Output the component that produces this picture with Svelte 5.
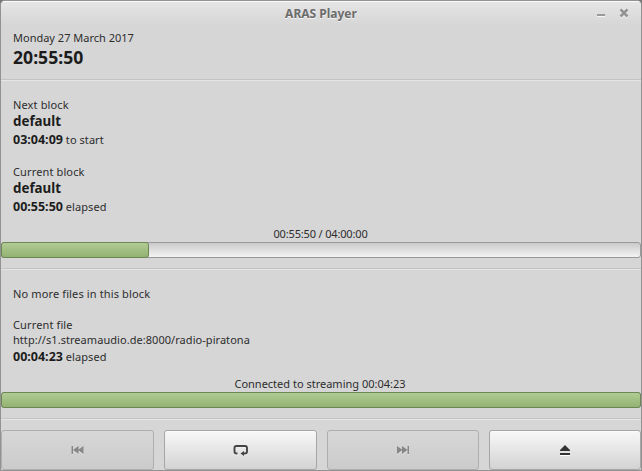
<script>
  let clock = $state('20:55:50');
  const blocks = [
    { label: 'Next block', name: 'default', time: '03:04:09', note: 'to start' },
    { label: 'Current block', name: 'default', time: '00:55:50', note: 'elapsed' }
  ];
  const buttons = [
    { id: 'previous', off: true },
    { id: 'repeat', off: false },
    { id: 'next', off: true },
    { id: 'eject', off: false }
  ];
</script>

<div class="window">
  <header>
    <h1>ARAS Player</h1>
    <div class="controls">
      <svg width="32" height="12" viewBox="0 0 32 12" shape-rendering="crispEdges">
        <path d="M0 9h8v1H0z" fill="#f7f7f7" />
        <path d="M0 7h8v2H0z" fill="#999" />
        <g shape-rendering="auto" fill="none" stroke-width="2.5">
          <path d="M23.5 3.5l7 7m0-7l-7 7" stroke="#f5f5f5" />
          <path d="M23.5 2.5l7 7m0-7l-7 7" stroke="#929292" />
        </g>
      </svg>
    </div>
  </header>

  <section class="date">
    <p>Monday 27 March 2017</p>
    <p class="clock">{clock}</p>
  </section>
  <hr />
  <section class="blocks">
    {#each blocks as block}
      <div class="block">
        <p class="label">{block.label}</p>
        <p class="name">{block.name}</p>
        <p class="timing"><b>{block.time}</b> {block.note}</p>
      </div>
    {/each}
  </section>
  <p class="caption total">00:55:50 / 04:00:00</p>
  <div class="progress"><div class="fill" style="width: 148px"></div></div>
  <hr />
  <section class="files">
    <p class="label">No more files in this block</p>
    <div class="file">
      <p class="label">Current file</p>
      <p class="address">http://s1.streamaudio.de:8000/radio-piratona</p>
      <p class="timing"><b>00:04:23</b> elapsed</p>
    </div>
  </section>
  <p class="caption stream">Connected to streaming 00:04:23</p>
  <div class="progress"><div class="fill" style="width: 640px"></div></div>
  <hr />
  <footer>
    {#each buttons as button}
      <button disabled={button.off} aria-label={button.id}>
        <svg width="16" height="16" viewBox="0 0 16 16">
          {#if button.id === 'previous'}
            <g transform="translate(-.5 0)">
              <path d="M2 5h1.500v8H2zM9 5v8L3.500 9zM14 5v8L8.500 9z" fill="#eee" opacity=".6" />
              <path d="M2 4h1.500v8H2zM9 4v8L3.500 8zM14 4v8L8.500 8z" fill="#878787" />
            </g>
          {:else if button.id === 'repeat'}
            <path d="M5 12.500H4q-2.500 0-2.500-2V6.500q0-2 2-2h8.500q2 0 2 2v4q0 2-2 2h-1" fill="none" stroke="#fff" stroke-width="1.8" opacity=".7" />
            <path d="M4.500 11.500H3.500q-2 0-2-2V6q0-2 2-2h8.500q2 0 2 2v3.500q0 2-2 2h-2" fill="none" stroke="#444" stroke-width="1.9" />
            <path d="M11 9v5l-3.500-2.500z" fill="#444" />
          {:else if button.id === 'next'}
            <path d="M2 5v8l5.500-4zM7 5v8l5.500-4zM12.500 5H14v8h-1.500z" fill="#eee" opacity=".6" />
            <path d="M2 4v8l5.500-4zM7 4v8l5.500-4zM12.500 4H14v8h-1.500z" fill="#878787" />
          {:else}
            <path d="M3 13h10v1H3z" fill="#fff" />
            <path d="M8 3l5 5v1H3V8zM3 11h10v2H3z" fill="#333" />
          {/if}
        </svg>
      </button>
    {/each}
  </footer>
</div>

<style>
  :global(body) { background: #777; }
  .window {
    box-sizing: border-box;
    width: 642px;
    height: 471px;
    border: 1px solid #929292;
    border-radius: 5px 5px 0 0;
    background: #d6d6d6;
    color: #2d2d2d;
    font: 11px/15px 'Noto Sans', sans-serif;
    overflow: hidden;
    display: flex;
    flex-direction: column;
  }
  p, h1 { margin: 0; white-space: pre; }
  header {
    height: 24px;
    flex: none;
    display: grid;
    grid-template-columns: 1fr auto 1fr;
    background: linear-gradient(#e6e6e6, #d6d6d6);
    box-shadow: inset 0 1px #fafafa;
  }
  h1 {
    grid-column: 2;
    font-size: 12px;
    line-height: 25px;
    font-weight: 700;
    color: #6c6c6c;
    text-shadow: 0 1px #f3f3f3;
  }
  .controls { justify-self: end; padding: 6px 12px 0 0; }
  svg { display: block; }
  hr {
    flex: none;
    box-sizing: border-box;
    width: 100%;
    height: 2px;
    margin: 0;
    border: 0;
    border-top: 1px solid #c3c3c3;
    background: #e6e6e6;
  }
  section { flex: none; padding: 0 12px; }
  .date { box-sizing: border-box; height: 54px; padding-top: 5px; }
  .clock { font-size: 17.600px; line-height: 24px; font-weight: 700; color: #1c1c1c; }
  .blocks { padding-top: 16px; display: grid; gap: 15px; }
  .label { letter-spacing: .13px; }
  .address { letter-spacing: .05px; }
  .name { font-size: 13.330px; line-height: 18px; font-weight: 700; color: #1c1c1c; }
  .timing { line-height: 19px; letter-spacing: .06px; }
  .timing b { font-size: 12.500px; letter-spacing: 0; color: #1c1c1c; }
  .caption { flex: none; text-align: center; margin-top: 10px; height: 16px; line-height: 15px; }
  .total { letter-spacing: -.16px; padding-right: 1px; }
  .stream { padding-right: 2px; }
  .progress {
    flex: none;
    box-sizing: border-box;
    height: 16px;
    margin-bottom: 10px;
    border: 1px solid #999;
    border-radius: 3px;
    background: linear-gradient(#cacaca, #f3f3f3);
  }
  .fill {
    box-sizing: border-box;
    height: 16px;
    margin: -1px;
    border: 1px solid #6c8753;
    border-radius: 3px;
    background: linear-gradient(#b1cc94, #92b272);
  }
  .files { padding-top: 16px; display: grid; gap: 16px; }
  footer {
    flex: none;
    display: grid;
    grid-template-columns: 153px 153px 152px 152px;
    gap: 10px;
    padding-top: 10px;
  }
  button {
    box-sizing: border-box;
    height: 40px;
    padding: 0;
    border: 1px solid #a6a6a6;
    border-radius: 3px;
    background: linear-gradient(#f8f8f8, #d3d3d3);
    box-shadow: inset 0 1px rgb(255 255 255 / 50%);
    display: grid;
    place-items: center;
  }
  button:disabled {
    border-color: #aeaeae;
    background: linear-gradient(#d7d7d7, #cbcbcb);
    box-shadow: none;
  }
</style>
